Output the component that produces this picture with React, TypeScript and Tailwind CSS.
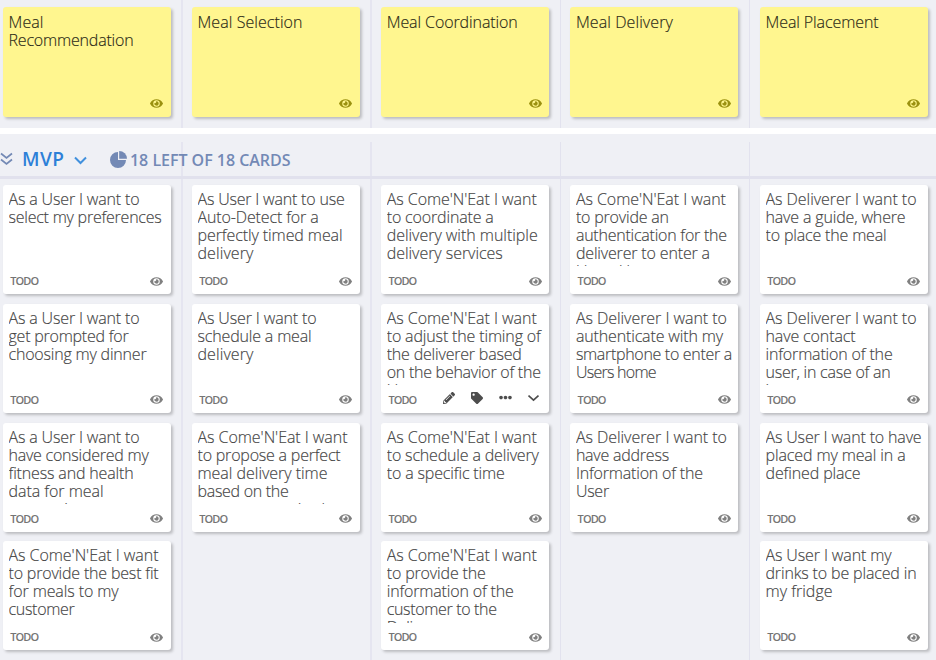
import { useLayoutEffect, useRef, useState } from "react";
import { FaEllipsisH, FaEye, FaPencilAlt, FaTag } from "react-icons/fa";

type Line = [text: string, width: number];
type Card = { lines: Line[]; active?: boolean };

const steps: Line[][] = [
  [["Meal", 35], ["Recommendation", 125]],
  [["Meal Selection", 105]],
  [["Meal Coordination", 131]],
  [["Meal Delivery", 97]],
  [["Meal Placement", 113]],
];

const columns: Card[][] = [
  [
    { lines: [["As a User I want to", 131], ["select my preferences", 153]] },
    { lines: [["As a User I want to", 131], ["get prompted for", 120], ["choosing my dinner", 138]] },
    { lines: [["As a User I want to", 131], ["have considered my", 140], ["fitness and health", 125], ["data for meal", 95], ["suggestions", 86]] },
    { lines: [["As Come'N'Eat I want", 150], ["to provide the best fit", 150], ["for meals to my", 110], ["customer", 66]] },
  ],
  [
    { lines: [["As User I want to use", 147], ["Auto-Detect for a", 121], ["perfectly timed meal", 145], ["delivery", 56]] },
    { lines: [["As User I want to", 119], ["schedule a meal", 114], ["delivery", 56]] },
    { lines: [["As Come'N'Eat I want", 150], ["to propose a perfect", 143], ["meal delivery time", 130], ["based on the", 91], ["consumers eating b", 133]] },
  ],
  [
    { lines: [["As Come'N'Eat I want", 150], ["to coordinate a", 107], ["delivery with multiple", 151], ["delivery services", 116]] },
    { lines: [["As Come'N'Eat I want", 150], ["to adjust the timing of", 154], ["the deliverer based", 135], ["on the behavior of the", 154], ["User", 33]], active: true },
    { lines: [["As Come'N'Eat I want", 150], ["to schedule a delivery", 152], ["to a specific time", 118]] },
    { lines: [["As Come'N'Eat I want", 150], ["to provide the", 99], ["information of the", 127], ["customer to the", 110], ["Deliverer", 62]] },
  ],
  [
    { lines: [["As Come'N'Eat I want", 150], ["to provide an", 93], ["authentication for the", 151], ["deliverer to enter a", 134], ["Users Home", 85]] },
    { lines: [["As Deliverer I want to", 151], ["authenticate with my", 147], ["smartphone to enter a", 156], ["Users home", 80]] },
    { lines: [["As Deliverer I want to", 151], ["have address", 93], ["Information of the", 127], ["User", 33]] },
  ],
  [
    { lines: [["As Deliverer I want to", 151], ["have a guide, where", 140], ["to place the meal", 121]] },
    { lines: [["As Deliverer I want to", 151], ["have contact", 90], ["information of the", 127], ["user, in case of an", 125], ["issue", 36]] },
    { lines: [["As User I want to have", 156], ["placed my meal in a", 140], ["defined place", 95]] },
    { lines: [["As User I want my", 126], ["drinks to be placed in", 151], ["my fridge", 67]] },
  ],
];

const columnWidths = ["w-[183px]", "w-[189px]", "w-[189px]", "w-[189px]", "w-[186px]"];
const columnPads = ["pl-[3px]", "pl-[9px]", "pl-[9.2px]", "pl-[9.4px]", "pl-[10px]"];
const columnBorders = [
  "border-r-2 border-[#e5e5f0]",
  "border-r-2 border-[#e5e5f0]",
  "border-r border-[#e2e2ee]",
  "border-r border-[#e2e2ee]",
  "",
];

/** A line of text whose tracking is adjusted to span the given width. */
function Fit({ text, width }: { text: string; width: number }) {
  const ref = useRef<HTMLSpanElement>(null);
  const [spacing, setSpacing] = useState(0);
  useLayoutEffect(() => {
    if (ref.current) {
      const natural = ref.current.getBoundingClientRect().width;
      setSpacing((width - natural) / text.length);
    }
  }, [text, width]);
  return (
    <div className="whitespace-nowrap">
      <span ref={ref} style={{ letterSpacing: spacing }}>
        {text}
      </span>
    </div>
  );
}

function StepCard({ lines }: { lines: Line[] }) {
  return (
    <div className="flex h-[110px] w-[168px] flex-col justify-between rounded-[3px] bg-[#fff68f] pt-[6px] pl-[5.5px] text-[#2a2816] shadow-[2px_2px_3px_rgba(0,0,0,0.22)]">
      <div className="text-[16px] leading-[18px] font-light [-webkit-text-stroke:0.15px]">
        {lines.map(([text, width]) => (
          <Fit key={text} text={text} width={width} />
        ))}
      </div>
      <div className="flex justify-end pr-[7.6px] pb-[7px]">
        <FaEye size={13} className="text-[#9b9110]" />
      </div>
    </div>
  );
}

function StoryCard({ lines, active }: Card) {
  return (
    <div className="flex h-[109px] w-[168px] shrink-0 flex-col rounded-[3px] bg-white pt-[5px] pl-[5.5px] text-[#444] shadow-[2px_2px_3px_rgba(0,0,0,0.22)]">
      <div className="h-[76.4px] overflow-hidden text-[16px] leading-[18px] font-light [-webkit-text-stroke:0.15px]">
        {lines.map(([text, width], i) => (
          <Fit key={i} text={text} width={width} />
        ))}
      </div>
      <div className="flex h-[27px] items-center justify-between pt-[2.4px] pr-[7.6px] pl-[1.7px] text-[11px] leading-4 font-semibold text-[#747474]">
        <Fit text="TODO" width={28} />
        {active ? (
          <div className="flex items-center pr-[3px] pb-[4px] text-[#4d4d4d]">
            <FaPencilAlt size={12} />
            <FaTag size={12} className="ml-4" />
            <FaEllipsisH size={13} className="ml-4" />
            <svg width="11" height="8" viewBox="0 0 11 8" className="ml-4">
              <path d="M0.5 1.5 5.5 6.2 10.5 1.5" fill="none" stroke="currentColor" strokeWidth="1.7" />
            </svg>
          </div>
        ) : (
          <FaEye size={13} className="text-[#808080]" />
        )}
      </div>
    </div>
  );
}

export default function App() {
  return (
    <div className="relative h-[660px] w-[936px] overflow-hidden bg-[#eff0f5] font-['Open_Sans','Noto_Sans',sans-serif]">
      <div className="flex h-[128px]">
        {steps.map((lines, i) => (
          <div key={i} className={`shrink-0 pt-[7.3px] ${columnWidths[i]} ${columnPads[i]} ${columnBorders[i]}`}>
            <StepCard lines={lines} />
          </div>
        ))}
      </div>
      <div className="h-[6px] bg-white" />
      <div className="relative h-[526px] pt-2">
        <div className="flex h-full">
          {columns.map((cards, i) => (
            <div key={i} className={`flex shrink-0 flex-col gap-[9.8px] pt-[43px] ${columnWidths[i]} ${columnPads[i]} ${columnBorders[i]}`}>
              {cards.map((card, j) => (
                <StoryCard key={j} {...card} />
              ))}
            </div>
          ))}
        </div>
        <div className="absolute inset-x-0 top-0 flex h-[45px] items-center border-b-[3px] border-[#e1e1ed] pt-[8px]">
          <svg width="13" height="14" viewBox="0 0 13 14" fill="none" stroke="#7389b5" strokeWidth="1.7">
            <path d="M1 1.5 6.5 6 12 1.5M1 7.5 6.5 12 12 7.5" />
          </svg>
          <div className="ml-[9px] text-[19px] leading-6 font-semibold text-[#2d80d8]">
            <Fit text="MVP" width={42.5} />
          </div>
          <svg width="13" height="9" viewBox="0 0 13 9" className="mt-[3px] ml-[9.5px]">
            <path d="M1 1.5 6.5 7 12 1.5" fill="none" stroke="#4190dd" strokeWidth="2" />
          </svg>
          <svg width="17" height="17" viewBox="0 0 17 17" className="ml-[23px]" fill="#7389b5">
            <path d="M8 1A8 8 0 1 0 16 9H8Z" />
            <path d="M9.2 0A7.8 7.8 0 0 1 17 7.8H9.2Z" />
          </svg>
          <div className="ml-[3px] pt-px text-[16px] leading-6 font-semibold text-[#7389b5]">
            <Fit text="18 LEFT OF 18 CARDS" width={160.5} />
          </div>
        </div>
      </div>
    </div>
  );
}
